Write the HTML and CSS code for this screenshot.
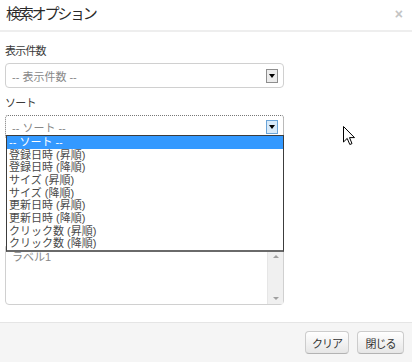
FILE: index.html
```html
<!DOCTYPE html>
<html lang="ja">
<head>
<meta charset="utf-8">
<title>検索オプション</title>
<link rel="stylesheet" href="styles.css">
</head>
<body>
<div class="modal">
  <div class="modal-header">
    <h3 class="modal-title">検索オプション</h3>
    <span class="close">×</span>
  </div>
  <div class="modal-body">
    <div class="group">
      <label class="label">表示件数</label>
      <div class="select">
        <span class="select-text">-- 表示件数 --</span>
        <span class="arrow"></span>
      </div>
    </div>
    <div class="group">
      <label class="label">ソート</label>
      <div class="select focused">
        <span class="select-text">-- ソート --</span>
        <span class="arrow hover"></span>
      </div>
    </div>
    <div class="group hidden-group">
      <label class="label">ラベル</label>
      <div class="listbox">
        <div class="listbox-items">
          <div class="listbox-item">ラベル1</div>
        </div>
        <div class="scrollbar">
          <span class="sb-up"></span>
          <span class="sb-down"></span>
        </div>
      </div>
    </div>
  </div>
  <div class="modal-footer">
    <button class="btn btn-clear">クリア</button>
    <button class="btn btn-close">閉じる</button>
  </div>
  <ul class="dropdown">
    <li class="option selected">-- ソート --</li>
    <li class="option">登録日時 (昇順)</li>
    <li class="option">登録日時 (降順)</li>
    <li class="option">サイズ (昇順)</li>
    <li class="option">サイズ (降順)</li>
    <li class="option">更新日時 (昇順)</li>
    <li class="option">更新日時 (降順)</li>
    <li class="option">クリック数 (昇順)</li>
    <li class="option">クリック数 (降順)</li>
  </ul>
  <svg class="cursor" width="13" height="20" viewBox="0 0 13 20">
    <path d="M0.5 0.5 L0.5 16 L4.2 12.4 L6.8 18.5 L9 17.6 L6.5 11.6 L11.5 11.6 Z" fill="#fff" stroke="#000" stroke-width="1" stroke-linejoin="miter"/>
  </svg>
</div>
</body>
</html>
```

FILE: styles.css
```css
* { box-sizing: border-box; }
html, body {
  margin: 0;
  padding: 0;
  background: #fff;
}
body {
  font-family: "Liberation Sans", "Noto Sans CJK JP", sans-serif;
  font-size: 11px;
  color: #333;
}
.modal {
  position: relative;
  width: 412px;
  height: 362px;
  display: flex;
  flex-direction: column;
  overflow: hidden;
}
.modal-header {
  height: 32px;
  display: flex;
  align-items: center;
  justify-content: space-between;
  padding: 0 9px 2px 6px;
  border-bottom: 2px solid #eeeeee;
}
.modal-title {
  margin: 0;
  font-size: 15px;
  letter-spacing: -2.2px;
  font-weight: normal;
  line-height: 20px;
  color: #2a2a2a;
}
.close {
  color: #c4c4c4;
  font-size: 14px;
  font-weight: bold;
  line-height: 14px;
}
.modal-body {
  flex: 1;
  padding: 10px 0 0 5px;
}
.group {
  display: flex;
  flex-direction: column;
  width: 279px;
}
.group + .group {
  margin-top: 6px;
}
.label {
  line-height: 18px;
  margin-bottom: 3px;
  color: #3a3a3a;
  letter-spacing: -0.8px;
}
.select {
  height: 25px;
  border: 1px solid #d0d0d0;
  border-radius: 4px;
  display: flex;
  align-items: center;
  justify-content: space-between;
  padding: 0 5px 0 6px;
  background: #fff;
}
.select.focused {
  border: 1px dotted #777;
  border-radius: 3px;
  height: 24px;
}
.select-text {
  color: #888;
}
.arrow {
  width: 12px;
  height: 14px;
  border: 1px solid #8e8e8e;
  background: #ececec;
  position: relative;
}
.arrow::after {
  content: "";
  position: absolute;
  left: 2px;
  top: 4px;
  border-left: 3px solid transparent;
  border-right: 3px solid transparent;
  border-top: 4px solid #000;
}
.arrow.hover {
  border-color: #6aa4d8;
  background: #d8eaf9;
}
.hidden-group {
  margin-top: 86px !important;
}
.hidden-group .label {
  visibility: hidden;
}
.listbox {
  height: 59px;
  border: 1px solid #d0d0d0;
  border-radius: 0 0 4px 4px;
  display: flex;
  background: #fff;
}
.listbox-items {
  flex: 1;
  padding: 3px 6px;
}
.listbox-item {
  color: #888;
  line-height: 14px;
}
.scrollbar {
  width: 16px;
  background: #f0f0f0;
  border-left: 1px solid #e6e6e6;
  display: flex;
  flex-direction: column;
  justify-content: space-between;
  align-items: center;
  padding: 8px 0 4px;
}
.sb-up {
  border-left: 3px solid transparent;
  border-right: 3px solid transparent;
  border-bottom: 3px solid #a0a0a0;
}
.sb-down {
  border-left: 3px solid transparent;
  border-right: 3px solid transparent;
  border-top: 3px solid #a0a0a0;
}
.modal-footer {
  height: 40px;
  background: #f5f5f5;
  border-top: 1px solid #e5e5e5;
  display: flex;
  justify-content: flex-end;
  align-items: center;
  gap: 8px;
  padding: 0 8px 0 0;
}
.btn {
  height: 23px;
  padding: 0;
  white-space: nowrap;
  font-family: "Liberation Sans", "Noto Sans CJK JP", sans-serif;
  font-size: 11px;
  letter-spacing: -1px;
  color: #333;
  border: 1px solid #cccccc;
  border-bottom-color: #b3b3b3;
  border-radius: 4px;
  background: linear-gradient(#ffffff, #e6e6e6);
}
.btn-clear {
  width: 44px;
}
.btn-close {
  width: 47px;
}
.dropdown {
  position: absolute;
  left: 6px;
  top: 135px;
  width: 278px;
  margin: 0;
  padding: 0;
  list-style: none;
  background: #fff;
  border: 1px solid #3c3c3c;
  border-bottom: 2px solid #6a6a6a;
}
.option {
  height: 12.67px;
  line-height: 12.67px;
  font-size: 11px;
  padding-left: 2px;
  color: #4a4a4a;
  white-space: nowrap;
}
.option.selected {
  background: #3399ff;
  color: #fff;
}
.cursor {
  position: absolute;
  left: 343px;
  top: 126px;
}
```
